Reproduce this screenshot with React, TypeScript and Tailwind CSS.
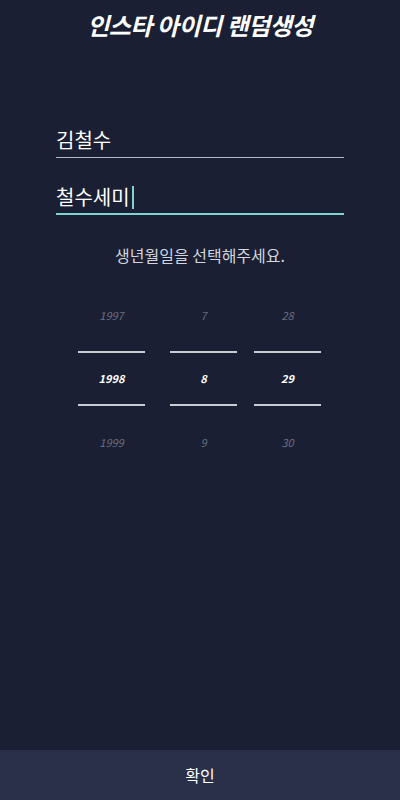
import React from "react";

const cols = [
  { items: ["1997", "1998", "1999"], w: "w-[67px]" },
  { items: ["7", "8", "9"], w: "w-[67px]" },
  { items: ["28", "29", "30"], w: "w-[67px]" },
];

export default function App() {
  return (
    <main
      className="w-[400px] h-[800px] bg-[#1a1f33] flex flex-col relative overflow-hidden"
      style={{ fontFamily: '"Noto Sans CJK KR", "Noto Sans", sans-serif' }}
    >
      {/* Title */}
      <h1 className="mt-[7px] text-center text-white text-[24px] font-bold italic leading-[36px] tracking-[-0.5px]">
        인스타 아이디 랜덤생성
      </h1>

      {/* Inputs */}
      <div className="mt-[82px] px-[56px] flex flex-col">
        <div className="border-b border-[#b4b8c4] pb-[2px]">
          <span className="text-white text-[20px] leading-[30px]">김철수</span>
        </div>
        <div className="mt-[24px] border-b-2 border-[#7fd3d0] pb-[1px] flex items-center">
          <span className="text-white text-[20px] leading-[30px]">철수세미</span>
          <span className="w-[2px] h-[23px] bg-[#7fd3d0] ml-[2px]" />
        </div>
      </div>

      {/* Birth prompt */}
      <p className="mt-[28px] text-center text-[#d3d6df] text-[16px] leading-[24px]">
        생년월일을 선택해주세요.
      </p>

      {/* Picker */}
      <div className="mt-[12px] flex justify-center gap-[25px] pr-[1px]">
        {cols.map((c, i) => (
          <div key={i} className={`${i === 2 ? "-ml-[8px]" : ""} flex flex-col items-center ${c.w}`}>
            <div className="h-[72px] flex items-center justify-center text-[#6a6f82] text-[11px] italic">
              {c.items[0]}
            </div>
            <div className="w-full h-[2px] bg-[#c9ccd5]" />
            <div className="h-[51px] flex items-center justify-center text-white text-[11px] font-semibold italic">
              {c.items[1]}
            </div>
            <div className="w-full h-[2px] bg-[#c9ccd5]" />
            <div className="h-[72px] flex items-center justify-center text-[#6a6f82] text-[11px] italic">
              {c.items[2]}
            </div>
          </div>
        ))}
      </div>

      {/* Confirm bar */}
      <button className="mt-auto h-[50px] w-full bg-[#2a3049] text-white text-[16px]">
        확인
      </button>
    </main>
  );
}
